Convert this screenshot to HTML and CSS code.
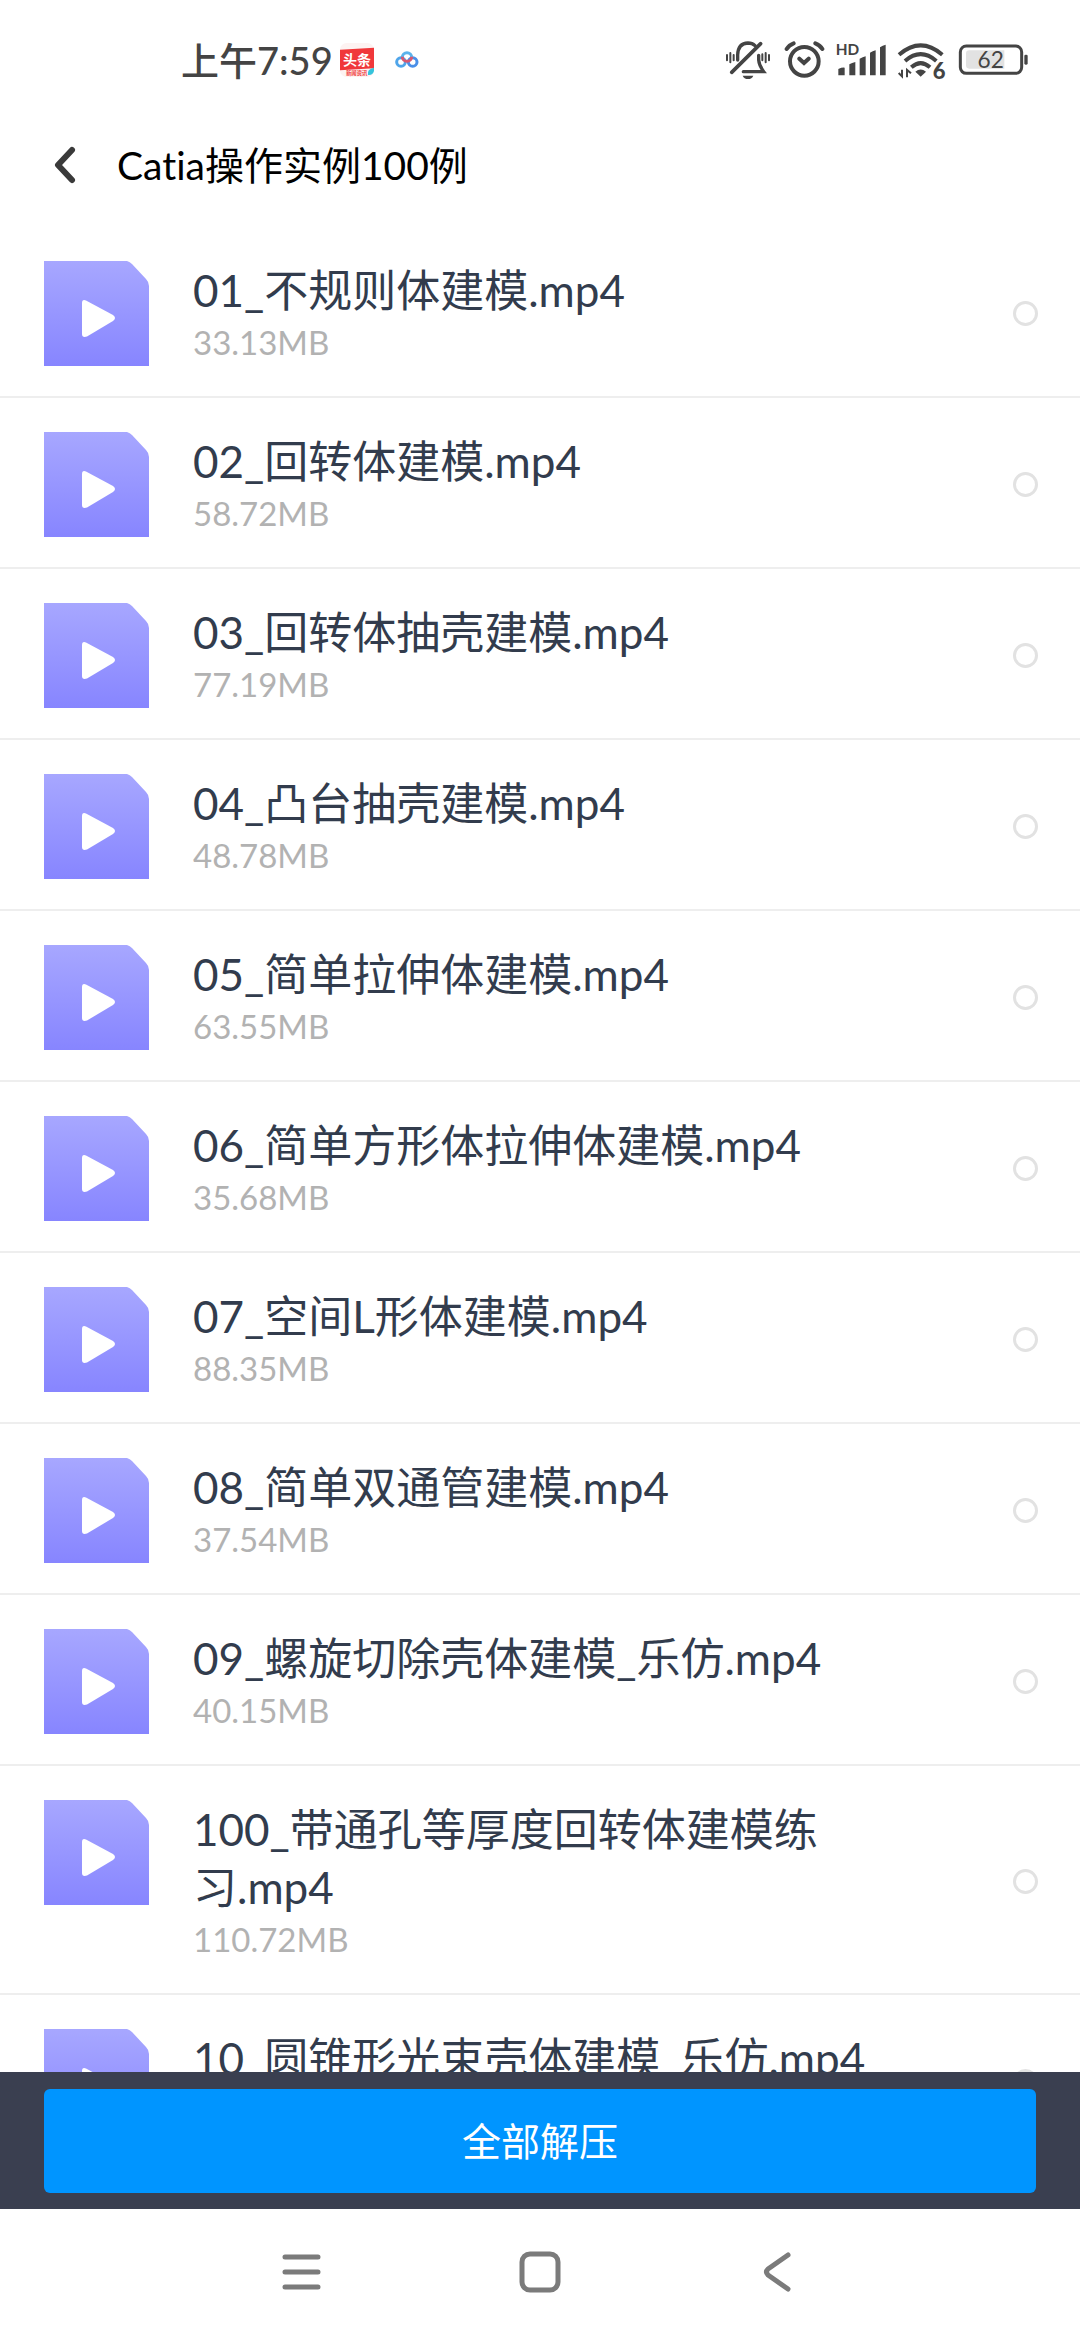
FILE: index.html
```html
<!DOCTYPE html>
<html lang="zh-CN">
  <head>
    <meta charset="utf-8">
    <title>Catia操作实例100例</title>
    <meta name="viewport" content="width=device-width, initial-scale=1">
    <link rel="stylesheet" href="styles.css">
  </head>

  <body>
    <!-- shared file icon -->
    <svg class="sprite" aria-hidden="true">
      <defs>
        <linearGradient id="fileBg" x1="0" y1="0" x2="0" y2="1">
          <stop offset="0" stop-color="#a7a7ff"/>
          <stop offset="1" stop-color="#8785ff"/>
        </linearGradient>
        <symbol id="video" viewBox="0 0 105 105">
          <path fill="url(#fileBg)" d="M0 0H83Q86 1 88 3L102 18Q105 21 105 25V105H0Z"/>
          <path fill="#fff" d="M38 42Q38 38 42 39.500L69 54Q73 57 69 60L43 75.500Q38 77 38 73Z"/>
        </symbol>
      </defs>
    </svg>

    <div class="status">
      <span class="time">上午7:59</span>
      <div class="apps">
        <svg width="34" height="34" viewBox="0 0 102 102">
          <rect width="102" height="102" rx="20" fill="#fdf3f2"/>
          <path fill="#f0383b" d="M0 20L102 14V76L0 82Z"/>
          <text x="51" y="65" class="logo-text" text-anchor="middle">头条</text>
          <text x="50" y="96" class="logo-sub" text-anchor="middle">新闻资讯</text>
          <path fill="#35c4dc" d="M84 96Q80 78 102 74V84Q98 98 84 96Z"/>
        </svg>
        <svg width="34" height="34" viewBox="0 0 102 102" fill="none" stroke-width="9">
          <circle cx="33" cy="57" r="13" stroke="#4fa5ea"/>
          <circle cx="68" cy="57" r="13" stroke="#4a8fe8"/>
          <path stroke="#5bb3ec" d="M37 43A14 14 0 0 1 65 43"/>
          <path stroke="#d9586f" d="M37 41A14 14 0 0 0 65 41"/>
        </svg>
      </div>
      <div class="signals">
        <!-- muted bell -->
        <svg width="48" height="43" viewBox="42 55 144 129" fill="none" stroke="#444" stroke-width="10" stroke-linecap="round">
          <path d="M80 118V103Q81 68 111 67Q124 67 132 75M143 104V118Q144 134 158 153H97"/>
          <path stroke-width="11" d="M62 155L149 69"/>
          <path stroke-width="6" d="M48 103V119M58 97V125M68 103V119M154 101V119M164 97V125M174 103V119"/>
          <path fill="#444" stroke="none" d="M95 165H127Q123 175 111 175T95 165Z"/>
        </svg>
        <!-- alarm -->
        <svg width="42" height="43" viewBox="216 55 126 129" fill="none" stroke="#444" stroke-width="12" stroke-linecap="round">
          <circle cx="280" cy="122" r="43"/>
          <path d="M227 85Q234 73 248 68M313 68Q328 74 334 85M265 114L279 127L293 114"/>
        </svg>
        <!-- mobile signal -->
        <svg width="51" height="43" viewBox="369 55 153 129" fill="#444">
          <text x="371" y="104" class="hd">HD</text>
          <path d="M379 145Q390 140 398 141V164H379ZM412 131Q420 126 430 124V164H412ZM443 114Q452 109 461 107V164H443ZM474 96Q482 91 491 89V164H474ZM504 80Q512 74 521 72V164H504Z"/>
        </svg>
        <!-- wifi 6 -->
        <svg width="52" height="43" viewBox="555 55 156 129" fill="none" stroke="#444" stroke-width="12">
          <path d="M564 102Q629 46 694 102M582 121Q629 80 676 121M601 140Q629 115 657 140"/>
          <path fill="#444" stroke="none" d="M613 153Q629 140 645 153L629 168Z"/>
          <path stroke-width="6" d="M573 147V167L563 157M588 170V148L600 158"/>
          <text x="665" y="176" class="six">6</text>
        </svg>
        <!-- battery -->
        <svg width="71" height="43" viewBox="741 55 213 129">
          <rect x="748" y="76" width="184" height="82" rx="18" fill="none" stroke="#444" stroke-width="9"/>
          <path fill="#e2e2e2" d="M775 89H880V144H775Q765 144 765 134V99Q765 89 775 89Z"/>
          <rect x="940" y="102" width="10" height="30" rx="4" fill="#444"/>
          <text x="839" y="143" class="level" text-anchor="middle">62</text>
        </svg>
      </div>
    </div>

    <div class="header">
      <button class="back" aria-label="返回">
        <svg width="24" height="40" viewBox="0 0 24 40" fill="none" stroke="#3a3a3a" stroke-width="6" stroke-linecap="round" stroke-linejoin="round">
          <path d="M19 5L5 20L19 35"/>
        </svg>
      </button>
      <h1>Catia操作实例100例</h1>
    </div>

    <ul class="files">
      <li class="file">
        <svg class="thumb"><use href="#video"/></svg>
        <div class="info"><label for="f1">01_不规则体建模.mp4</label><p>33.13MB</p></div>
        <input type="checkbox" id="f1">
      </li>
      <li class="file">
        <svg class="thumb"><use href="#video"/></svg>
        <div class="info"><label for="f2">02_回转体建模.mp4</label><p>58.72MB</p></div>
        <input type="checkbox" id="f2">
      </li>
      <li class="file">
        <svg class="thumb"><use href="#video"/></svg>
        <div class="info"><label for="f3">03_回转体抽壳建模.mp4</label><p>77.19MB</p></div>
        <input type="checkbox" id="f3">
      </li>
      <li class="file">
        <svg class="thumb"><use href="#video"/></svg>
        <div class="info"><label for="f4">04_凸台抽壳建模.mp4</label><p>48.78MB</p></div>
        <input type="checkbox" id="f4">
      </li>
      <li class="file">
        <svg class="thumb"><use href="#video"/></svg>
        <div class="info"><label for="f5">05_简单拉伸体建模.mp4</label><p>63.55MB</p></div>
        <input type="checkbox" id="f5">
      </li>
      <li class="file">
        <svg class="thumb"><use href="#video"/></svg>
        <div class="info"><label for="f6">06_简单方形体拉伸体建模.mp4</label><p>35.68MB</p></div>
        <input type="checkbox" id="f6">
      </li>
      <li class="file">
        <svg class="thumb"><use href="#video"/></svg>
        <div class="info"><label for="f7">07_空间L形体建模.mp4</label><p>88.35MB</p></div>
        <input type="checkbox" id="f7">
      </li>
      <li class="file">
        <svg class="thumb"><use href="#video"/></svg>
        <div class="info"><label for="f8">08_简单双通管建模.mp4</label><p>37.54MB</p></div>
        <input type="checkbox" id="f8">
      </li>
      <li class="file">
        <svg class="thumb"><use href="#video"/></svg>
        <div class="info"><label for="f9">09_螺旋切除壳体建模_乐仿.mp4</label><p>40.15MB</p></div>
        <input type="checkbox" id="f9">
      </li>
      <li class="file">
        <svg class="thumb"><use href="#video"/></svg>
        <div class="info"><label for="f100">100_带通孔等厚度回转体建模练习.mp4</label><p>110.72MB</p></div>
        <input type="checkbox" id="f100">
      </li>
      <li class="file">
        <svg class="thumb"><use href="#video"/></svg>
        <div class="info"><label for="f10">10_圆锥形光束壳体建模_乐仿.mp4</label></div>
        <input type="checkbox" id="f10">
      </li>
    </ul>

    <div class="actions">
      <button class="extract">全部解压</button>
    </div>

    <div class="nav">
      <button aria-label="菜单">
        <svg width="42" height="42" viewBox="0 0 42 42"><path d="M4 6H37M4 21H37M4 36H37"/></svg>
      </button>
      <button aria-label="主页">
        <svg width="42" height="42" viewBox="0 0 42 42"><rect x="3" y="3" width="36" height="36" rx="8"/></svg>
      </button>
      <button aria-label="返回">
        <svg width="42" height="42" viewBox="0 0 42 42"><path d="M31 4L11 18Q8 21 11 24L31 38" /></svg>
      </button>
    </div>
  </body>
</html>
```
FILE: styles.css
```css
* { box-sizing: border-box; }
body {
    margin: 0;
    height: 100vh;
    display: flex;
    flex-direction: column;
    background-color: #fff;
    color: #323c4d;
    font-family: Lato, "Noto Sans CJK SC", sans-serif;
    font-variant-ligatures: none;
}
button { padding: 0; border: none; background: none; font-family: inherit; cursor: pointer; }
svg { display: block; flex: none; }
.sprite { width: 0; height: 0; position: absolute; }

/* status bar */
.status { flex: none; height: 120px; padding: 0 51px 0 181px; display: flex; align-items: center; }
.time { font-size: 38px; font-weight: 500; line-height: 44px; color: #444; }
.apps { display: flex; gap: 16px; margin-left: 7px; }
.signals { display: flex; gap: 10px; margin-left: auto; }
.logo-text { font-size: 42px; font-weight: 700; fill: #fff; }
.logo-sub { font-size: 16px; font-weight: 700; fill: #f0383b; }
.hd { font-size: 46px; font-weight: 700; }
.six { font-size: 66px; font-weight: 900; fill: #444; stroke: none; }
.level { font-size: 68px; fill: #444; }

/* title */
.header { flex: none; height: 90px; padding: 0 44px 0 53px; display: flex; align-items: center; gap: 40px; }
.header h1 { margin: 0; font-size: 39px; font-weight: 400; line-height: 44px; color: #000; }

/* file list */
.files { flex: 1; min-height: 0; margin: 0; padding: 17px 0 0; overflow: hidden; list-style: none; }
.file { display: flex; align-items: center; padding: 34px 42px 30px 44px; border-bottom: 2px solid #eee; }
.thumb { width: 105px; height: 105px; align-self: flex-start; }
.info { flex: 1; min-height: 105px; padding: 0 80px 0 44px; }
.info label { display: block; font-size: 44px; line-height: 58px; }
.info p { margin: 0; font-size: 33px; line-height: 46px; color: #b2b2b2; }
.info p::after { content: ""; display: block; height: 1px; }
.file input {
    appearance: none;
    flex: none;
    width: 25px;
    height: 25px;
    margin: 0;
    border: 3px solid #e2e2e2;
    border-radius: 50%;
}
.file input:checked { background-color: #0095ff; border-color: #0095ff; }

/* bottom action */
.actions { flex: none; padding: 17px 44px 16px; background-color: #3a3f50; }
.extract { display: block; width: 100%; height: 104px; border-radius: 6px; background-color: #0095ff; color: #fff; font-size: 39px; line-height: 44px; }

/* system navigation */
.nav { flex: none; height: 131px; padding-bottom: 5px; display: flex; justify-content: center; }
.nav button { width: 22%; display: flex; align-items: center; justify-content: center; }
.nav svg { fill: none; stroke: #7b7b7b; stroke-width: 5; stroke-linecap: round; stroke-linejoin: round; }
```
